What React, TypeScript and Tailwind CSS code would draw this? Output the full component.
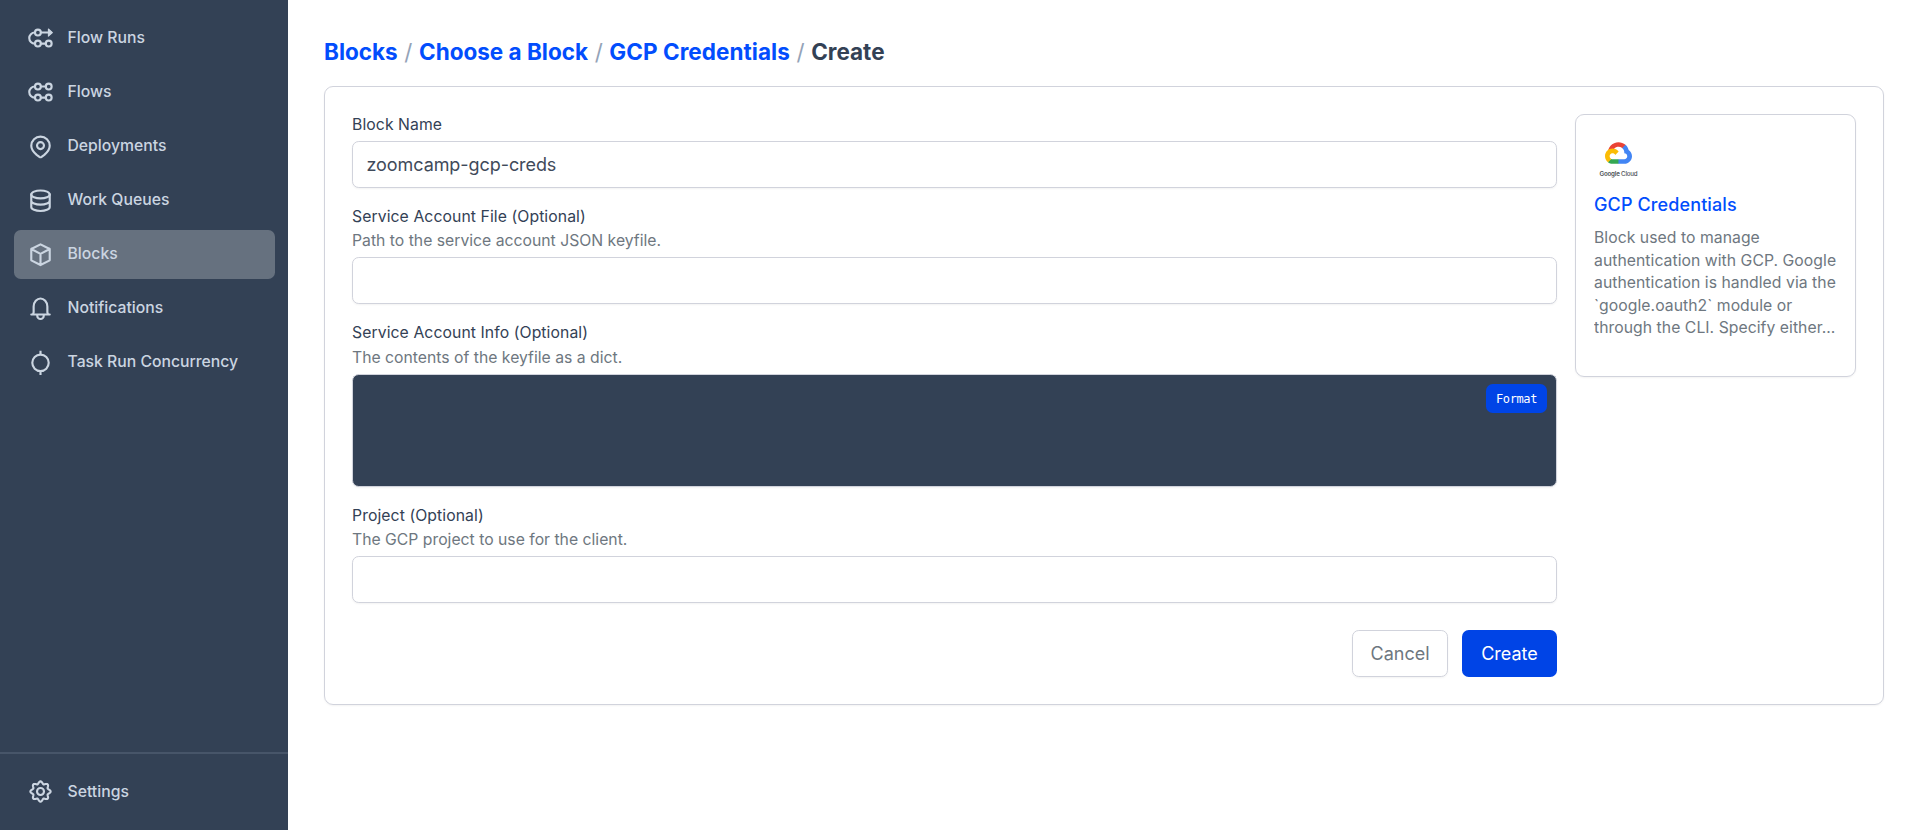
import React from "react";

function Icon({ children }: { children: React.ReactNode }) {
  return (
    <svg
      viewBox="0 0 24 24"
      className="h-[27px] w-[27px] shrink-0"
      fill="none"
      stroke="currentColor"
      strokeWidth="1.9"
      strokeLinecap="round"
      strokeLinejoin="round"
    >
      {children}
    </svg>
  );
}

// Outline of a cog with eight rounded teeth.
const cogPath =
  Array.from({ length: 96 }, (_, i) => {
    const a = (i / 96) * Math.PI * 2;
    const r = 7.95 + 1.05 * Math.cos(8 * a);
    return `${i === 0 ? "M" : "L"}${(12 + r * Math.sin(a)).toFixed(2)} ${(12 - r * Math.cos(a)).toFixed(2)}`;
  }).join("") + "Z";

const items = [
  {
    label: "Flow Runs",
    icon: (
      <Icon>
        <circle cx="9.7" cy="6.7" r="2.6" />
        <circle cx="9.7" cy="16.5" r="2.6" />
        <circle cx="19.3" cy="16.5" r="2.6" />
        <path d="M6.9 6.7A4.9 4.9 0 0 0 6.9 16.5M12.4 16.5H16.6M12.4 6.7H19.2" />
        <path d="M19 3.5L22.6 6.7L19 9.9Z" fill="currentColor" strokeWidth="0.9" />
      </Icon>
    ),
  },
  {
    label: "Flows",
    icon: (
      <Icon>
        <circle cx="9.7" cy="6.7" r="2.6" />
        <circle cx="19.3" cy="6.7" r="2.6" />
        <circle cx="9.7" cy="16.5" r="2.6" />
        <circle cx="19.3" cy="16.5" r="2.6" />
        <path d="M6.9 6.7A4.9 4.9 0 0 0 6.9 16.5M12.4 16.5H16.6M12.4 6.7H16.6" />
      </Icon>
    ),
  },
  {
    label: "Deployments",
    icon: (
      <Icon>
        <path d="M12 3.2A8.2 8.2 0 0 1 20.2 11.3C20.2 14.8 17.6 17.5 15.4 19.4L13 21.2Q12 21.9 11 21.2L8.6 19.4C6.4 17.5 3.8 14.8 3.8 11.3A8.2 8.2 0 0 1 12 3.2Z" />
        <circle cx="12" cy="11.2" r="3.1" />
      </Icon>
    ),
  },
  {
    label: "Work Queues",
    icon: (
      <Icon>
        <ellipse cx="12" cy="6.6" rx="8.2" ry="3.5" />
        <path d="M3.8 6.6V17.7C3.8 19.7 7.5 21.3 12 21.3S20.2 19.7 20.2 17.7V6.6M3.8 12.2C3.8 14.1 7.5 15.7 12 15.7S20.2 14.1 20.2 12.2" />
      </Icon>
    ),
  },
  {
    label: "Blocks",
    active: true,
    icon: (
      <Icon>
        <path d="M12 3L20.2 7.1V17.2L12 21.4L3.8 17.2V7.1ZM3.8 7.1L12 11.4L20.2 7.1M12 11.4V21.4" />
      </Icon>
    ),
  },
  {
    label: "Notifications",
    icon: (
      <Icon>
        <path d="M3.8 17.3H20.2M5.3 17.1L5.9 15.4V10.2C5.9 6.2 8.9 3.1 12 3.1S18.1 6.2 18.1 10.2V15.4L18.7 17.1M9.1 17.6V18.4A2.9 2.9 0 0 0 14.9 18.4V17.6" />
      </Icon>
    ),
  },
  {
    label: "Task Run Concurrency",
    icon: (
      <Icon>
        <circle cx="12" cy="12.3" r="7.3" />
        <path d="M12 1.5V5M12 19.6V23.1" strokeLinecap="butt" />
      </Icon>
    ),
  },
];

function NavItem({ label, icon, active }: { label: string; icon: React.ReactNode; active?: boolean }) {
  return (
    <a
      className={`flex h-[49.5px] items-center gap-[13.5px] rounded-[6.75px] px-[13.5px] text-[15.75px] leading-[22.5px] font-medium text-[#cbd5e1] ${
        active ? "bg-[#66717f]" : ""
      }`}
    >
      {icon}
      <span>{label}</span>
    </a>
  );
}

function Field({
  label,
  help,
  roomy,
  children,
}: {
  label: string;
  help?: string;
  roomy?: boolean;
  children: React.ReactNode;
}) {
  return (
    <div className="flex flex-col">
      <label className="h-[22px] text-[15.75px] leading-[22px] tracking-[0.08px] text-[#334155]">{label}</label>
      {help && (
        <p
          className={`h-[22px] text-[15.75px] leading-[22px] text-[#6e7780] ${
            roomy ? "mt-[3px]" : "mt-[2px]"
          }`}
        >
          {help}
        </p>
      )}
      <div className="mt-[5px] flex flex-col">{children}</div>
    </div>
  );
}

function TextInput({ value = "" }: { value?: string }) {
  return (
    <input
      defaultValue={value}
      className="h-[47px] w-full rounded-[6.75px] border border-[#d1d3dc] bg-white px-[13.5px] text-[18px] tracking-[-0.07px] text-[#3f4a5a] shadow-xs"
    />
  );
}

function GoogleCloudLogo() {
  return (
    <div className="flex h-[49px] w-[49px] flex-col items-center pt-[9px]">
      <svg viewBox="0 0 256 206" className="h-[22px] w-[27px]">
        <path
          fill="#ea4335"
          d="M170.252 56.819L192.505 34.566L193.988 25.196C153.437 -11.677 88.976 -7.496 52.421 33.92C42.267 45.423 34.734 59.764 30.717 74.573L38.687 73.45L83.191 66.111L86.627 62.597C106.424 40.855 139.897 37.93 162.756 56.43Z"
        />
        <path
          fill="#4285f4"
          d="M224.205 73.918C219.09 55.082 208.589 38.15 193.988 25.196L162.756 56.428C175.945 67.204 183.453 83.422 183.135 100.447V105.991C198.486 105.991 210.932 118.434 210.932 133.787C210.932 149.139 198.489 161.285 183.135 161.285H127.465L122 167.224V200.565L127.464 205.795H183.134C223.031 206.105 255.685 174.306 255.996 134.409C256.184 110.225 244.253 87.56 224.205 73.918"
        />
        <path
          fill="#34a853"
          d="M71.87 205.796H127.464V161.29H71.87C67.91 161.289 63.995 160.437 60.391 158.793L52.491 161.215L30.158 183.467L28.214 191.012C40.78 200.501 56.122 205.865 71.87 205.796"
        />
        <path
          fill="#fbbc05"
          d="M71.87 61.426C31.972 61.663 -0.182 94.199 0.056 134.096C0.189 156.376 10.563 177.358 28.213 190.954L60.461 158.706C46.451 152.377 40.225 135.889 46.555 121.878C52.884 107.869 69.373 101.643 83.383 107.973C89.556 110.763 94.499 115.709 97.291 121.881L129.539 89.633C115.817 71.694 94.504 61.237 71.919 61.354"
        />
      </svg>
      <span className="mt-[6px] text-[6.2px] leading-[8px] tracking-[-0.22px] whitespace-nowrap text-[#4b4f54]">
        <span className="font-semibold">Google</span> <span className="font-medium">Cloud</span>
      </span>
    </div>
  );
}

export default function App() {
  return (
    <div className="flex h-[830px] w-full bg-white font-['Inter',sans-serif]">
      <aside className="flex w-[288px] shrink-0 flex-col bg-[#334155]">
        <nav className="flex grow flex-col gap-[4.5px] p-[13.5px]">
          {items.map((item) => (
            <NavItem key={item.label} {...item} />
          ))}
        </nav>
        <div className="h-[78px] border-t-2 border-[#475569] px-[13.5px] pt-[13px]">
          <NavItem
            label="Settings"
            icon={
              <Icon>
                <path d={cogPath} />
                <circle cx="12" cy="12" r="3.1" />
              </Icon>
            }
          />
        </div>
      </aside>

      <main className="flex grow flex-col items-stretch pt-[36px] pr-[36px] pl-[36px]">
        <h1 className="flex h-[32px] items-center gap-[6.6px] text-[22.5px] leading-[32px] font-bold text-[#024dfd]">
          <a>Blocks</a>
          <span className="font-normal text-[#94a3b8]">/</span>
          <a>Choose a Block</a>
          <span className="font-normal text-[#94a3b8]">/</span>
          <a className="tracking-[0.05px]">GCP Credentials</a>
          <span className="font-normal text-[#94a3b8]">/</span>
          <span className="text-[#334155]">Create</span>
        </h1>

        <section className="mt-[18px] flex h-[619px] items-start gap-[18px] rounded-[9px] border border-[#d1d3dc] p-[27px] shadow-xs">
          <form className="flex grow flex-col gap-[18px]">
            <Field label="Block Name">
              <TextInput value="zoomcamp-gcp-creds" />
            </Field>
            <Field label="Service Account File (Optional)" help="Path to the service account JSON keyfile.">
              <TextInput />
            </Field>
            <Field label="Service Account Info (Optional)" help="The contents of the keyfile as a dict." roomy>
              <div className="flex h-[113px] items-start justify-end rounded-[6.75px] border border-[#d1d3dc] bg-[#334155] p-[9px] shadow-xs">
                <button
                  type="button"
                  className="h-[29px] w-[61px] rounded-[6.75px] bg-[#0044e6] font-['DejaVu_Sans_Mono',monospace] text-[12px] tracking-[-0.4px] text-white"
                >
                  Format
                </button>
              </div>
            </Field>
            <Field label="Project (Optional)" help="The GCP project to use for the client.">
              <TextInput />
            </Field>
            <div className="mt-[9px] flex justify-end gap-[14px]">
              <button
                type="button"
                className="h-[47px] w-[96px] rounded-[6.75px] border border-[#d1d3dc] text-[18px] text-[#6e7780] shadow-xs"
              >
                Cancel
              </button>
              <button type="button" className="h-[47px] w-[95px] rounded-[6.75px] bg-[#0044e6] text-[18px] text-white">
                Create
              </button>
            </div>
          </form>

          <aside className="flex h-[263px] w-[281px] shrink-0 flex-col rounded-[9px] border border-[#d1d3dc] px-[18px] pt-[18px] shadow-xs">
            <GoogleCloudLogo />
            <h2 className="mt-[9px] text-[18px] leading-[27px] font-medium tracking-[0.12px] text-[#024dfd]">
              GCP Credentials
            </h2>
            <p className="mt-[9px] line-clamp-5 text-[15.75px] leading-[22.5px] tracking-[0.04px] text-[#6e7780]">
              Block used to manage authentication with GCP. Google authentication is handled via the `google.oauth2`
              module or through the CLI. Specify either...
            </p>
          </aside>
        </section>
      </main>
    </div>
  );
}
